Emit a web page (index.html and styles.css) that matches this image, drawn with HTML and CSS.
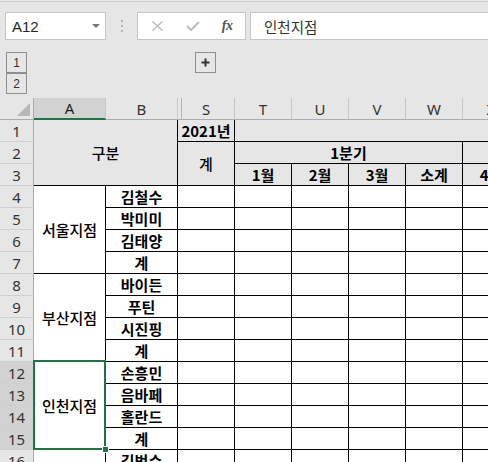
FILE: index.html
```html
<!DOCTYPE html>
<html lang="ko">
<head>
<meta charset="utf-8">
<title>Sheet</title>
<link rel="stylesheet" href="styles.css">
</head>
<body>
<div class="top">
  <div class="fbar">
    <div class="namebox"><span class="nametxt">A12</span><svg class="dd" width="8" height="4" viewBox="0 0 8 4"><polygon points="0,0 8,0 4,4" fill="#7a7a7a"/></svg></div>
    <div class="sep"><svg width="2" height="12" viewBox="0 0 2 12"><rect x="0" y="0" width="2" height="2" fill="#b4b4b4"/><rect x="0" y="5" width="2" height="2" fill="#b4b4b4"/><rect x="0" y="10" width="2" height="2" fill="#b4b4b4"/></svg></div>
    <div class="fxbtns">
      <span class="ib w1"><svg width="11" height="10" viewBox="0 0 11 10"><path d="M0.5 0.5L10.5 9.5M10.5 0.5L0.5 9.5" stroke="#bdbdbd" stroke-width="1.4" fill="none"/></svg></span>
      <span class="ib w2"><svg width="14" height="10" viewBox="0 0 14 10"><polyline points="1,5 5,9 13,1" stroke="#bdbdbd" stroke-width="2" fill="none"/></svg></span>
      <span class="ib w3 fx">fx</span>
    </div>
    <div class="finput">인천지점</div>
  </div>
  <div class="outline">
    <div class="lvls">
      <div class="lvl">1</div>
      <div class="lvl">2</div>
    </div>
    <div class="plus"><svg width="9" height="9" viewBox="0 0 9 9"><path d="M4.5 0.5V8.5M0.5 4.5H8.5" stroke="#333" stroke-width="2" fill="none"/></svg></div>
  </div>
</div>
<div class="sheet">
  <div class="cnr"><svg width="33" height="21" viewBox="0 0 33 21"><polygon points="30,5 30,18 17,18" fill="#b6b6b6"/></svg></div>
  <div class="ch on">A</div>
  <div class="ch">B</div>
  <div class="ch hid">S</div>
  <div class="ch">T</div>
  <div class="ch">U</div>
  <div class="ch">V</div>
  <div class="ch">W</div>
  <div class="ch">X</div>

  <div class="rh">1</div>
  <div class="c g ab">구분</div>
  <div class="c g b">2021년</div>
  <div class="c g c5 nbr"></div>

  <div class="rh">2</div>
  <div class="c g r2">계</div>
  <div class="c g c4 b">1분기</div>
  <div class="c g"></div>

  <div class="rh">3</div>
  <div class="c g b">1월</div>
  <div class="c g b">2월</div>
  <div class="c g b">3월</div>
  <div class="c g b">소계</div>
  <div class="c g b">4월</div>

  <div class="rh">4</div>
  <div class="c r4">서울지점</div>
  <div class="c b">김철수</div>
  <div class="c"></div><div class="c"></div><div class="c"></div><div class="c"></div><div class="c"></div><div class="c"></div>
  <div class="rh">5</div>
  <div class="c b">박미미</div>
  <div class="c"></div><div class="c"></div><div class="c"></div><div class="c"></div><div class="c"></div><div class="c"></div>
  <div class="rh">6</div>
  <div class="c b">김태양</div>
  <div class="c"></div><div class="c"></div><div class="c"></div><div class="c"></div><div class="c"></div><div class="c"></div>
  <div class="rh">7</div>
  <div class="c b">계</div>
  <div class="c"></div><div class="c"></div><div class="c"></div><div class="c"></div><div class="c"></div><div class="c"></div>

  <div class="rh">8</div>
  <div class="c r4">부산지점</div>
  <div class="c b">바이든</div>
  <div class="c"></div><div class="c"></div><div class="c"></div><div class="c"></div><div class="c"></div><div class="c"></div>
  <div class="rh">9</div>
  <div class="c b">푸틴</div>
  <div class="c"></div><div class="c"></div><div class="c"></div><div class="c"></div><div class="c"></div><div class="c"></div>
  <div class="rh">10</div>
  <div class="c b">시진핑</div>
  <div class="c"></div><div class="c"></div><div class="c"></div><div class="c"></div><div class="c"></div><div class="c"></div>
  <div class="rh">11</div>
  <div class="c b">계</div>
  <div class="c"></div><div class="c"></div><div class="c"></div><div class="c"></div><div class="c"></div><div class="c"></div>

  <div class="rh on">12</div>
  <div class="c r4 sel">인천지점</div>
  <div class="c b">손흥민</div>
  <div class="c"></div><div class="c"></div><div class="c"></div><div class="c"></div><div class="c"></div><div class="c"></div>
  <div class="rh on">13</div>
  <div class="c b">음바페</div>
  <div class="c"></div><div class="c"></div><div class="c"></div><div class="c"></div><div class="c"></div><div class="c"></div>
  <div class="rh on">14</div>
  <div class="c b">홀란드</div>
  <div class="c"></div><div class="c"></div><div class="c"></div><div class="c"></div><div class="c"></div><div class="c"></div>
  <div class="rh on">15</div>
  <div class="c b">계</div>
  <div class="c"></div><div class="c"></div><div class="c"></div><div class="c"></div><div class="c"></div><div class="c"></div>

  <div class="rh">16</div>
  <div class="c r4"></div>
  <div class="c b">김범수</div>
  <div class="c"></div><div class="c"></div><div class="c"></div><div class="c"></div><div class="c"></div><div class="c"></div>
</div>
</body>
</html>
```
FILE: styles.css
```css
html, body {
  margin: 0;
  padding: 0;
}
body {
  width: 488px;
  height: 462px;
  overflow: hidden;
  background: #e6e6e6;
  font-family: "Noto Sans", "Liberation Sans", sans-serif;
  color: #262626;
}
.top {
  height: 97px;
  box-sizing: border-box;
  border-top: 1px solid #d4d4d4;
  margin-top: 1px;
  background: #e6e6e6;
  overflow: hidden;
}
.fbar {
  margin-top: 10px;
  height: 28px;
  display: flex;
  align-items: stretch;
}
.namebox {
  margin-left: 5px;
  width: 101px;
  box-sizing: border-box;
  background: #fff;
  border: 1px solid #c6c6c6;
  display: flex;
  align-items: center;
  justify-content: space-between;
  padding: 0 5px 0 6px;
}
.nametxt {
  font-family: "Liberation Sans", Arial, sans-serif;
  font-size: 15px;
  color: #262626;
}
.sep {
  width: 31px;
  display: flex;
  align-items: center;
  justify-content: center;
}
.fxbtns {
  width: 109px;
  box-sizing: border-box;
  background: #fff;
  border: 1px solid #c6c6c6;
  display: flex;
  align-items: center;
}
.ib {
  display: flex;
  align-items: center;
  justify-content: center;
  height: 100%;
}
.w1 { width: 39px; }
.w2 { width: 33px; }
.w3 { width: 36px; }
.fx {
  font-family: "Liberation Serif", "DejaVu Serif", serif;
  font-style: italic;
  font-weight: 700;
  font-size: 14px;
  color: #555;
  letter-spacing: -0.5px;
}
.finput {
  flex: 1;
  margin-left: 4px;
  margin-right: -3px;
  box-sizing: border-box;
  background: #fff;
  border: 1px solid #c6c6c6;
  display: flex;
  align-items: center;
  padding-left: 13px;
  font-family: "Noto Sans CJK KR", sans-serif;
  font-size: 14.5px;
  color: #333;
}
.outline {
  margin-top: 12px;
  display: flex;
  align-items: flex-start;
}
.lvls {
  margin-left: 6px;
  display: flex;
  flex-direction: column;
}
.lvl {
  width: 21px;
  height: 21px;
  box-sizing: border-box;
  border: 1px solid #8e8e8e;
  display: flex;
  align-items: center;
  justify-content: center;
  font-family: "Liberation Sans", Arial, sans-serif;
  font-size: 12px;
  color: #333;
}
.plus {
  margin-left: 168px;
  width: 21px;
  height: 21px;
  box-sizing: border-box;
  border: 1px solid #8e8e8e;
  display: flex;
  align-items: center;
  justify-content: center;
}
.sheet {
  display: grid;
  grid-template-columns: 34px 72px 72px 57px 57px 57px 57px 57px 57px;
  grid-auto-rows: 22px;
  width: 521px;
  background: #fff;
}
.cnr {
  background: #e6e6e6;
  border-right: 1px solid #ababab;
  border-bottom: 1px solid #ababab;
  box-sizing: border-box;
}
.cnr svg { display: block; }
.ch {
  background: #e6e6e6;
  border-right: 1px solid #c8c8c8;
  border-bottom: 1px solid #ababab;
  box-sizing: border-box;
  display: flex;
  align-items: center;
  justify-content: center;
  font-family: "Noto Sans", "Liberation Sans", sans-serif;
  font-size: 15px;
  color: #333;
}
.ch.on {
  background: #d2d2d2;
  border-bottom: 2px solid #217346;
  color: #1f1f1f;
}
.ch.hid {
  box-shadow: inset 3px 0 0 #e6e6e6, inset 4px 0 0 #b4b4b4;
}
.rh {
  background: #e6e6e6;
  border-right: 1px solid #ababab;
  border-bottom: 1px solid #cfcfcf;
  box-sizing: border-box;
  display: flex;
  align-items: center;
  justify-content: center;
  font-family: "Noto Sans", "Liberation Sans", sans-serif;
  font-size: 15px;
  color: #333;
}
.rh.on {
  background: #d2d2d2;
}
.c {
  background: #fff;
  border-right: 1px solid #000;
  border-bottom: 1px solid #000;
  box-sizing: border-box;
  display: flex;
  align-items: center;
  justify-content: center;
  font-family: "Noto Sans CJK KR", sans-serif;
  font-size: 15px;
  font-weight: 500;
  color: #000;
  white-space: nowrap;
  overflow: visible;
}
.g { background: #e7e6e6; }
.b { font-weight: 700; }
.nbr { border-right: none; }
.ab { grid-column: span 2; grid-row: span 3; }
.r2 { grid-row: span 2; }
.r4 { grid-row: span 4; }
.c4 { grid-column: span 4; }
.c5 { grid-column: span 5; }
.sel { position: relative; }
.sel::after {
  content: "";
  position: absolute;
  top: -2px;
  left: -1px;
  right: -1px;
  bottom: -1px;
  border: 2px solid #217346;
}
.sel::before {
  content: "";
  position: absolute;
  right: -4px;
  bottom: -4px;
  width: 5px;
  height: 5px;
  background: #217346;
  border: 1px solid #fff;
  z-index: 2;
}
```
